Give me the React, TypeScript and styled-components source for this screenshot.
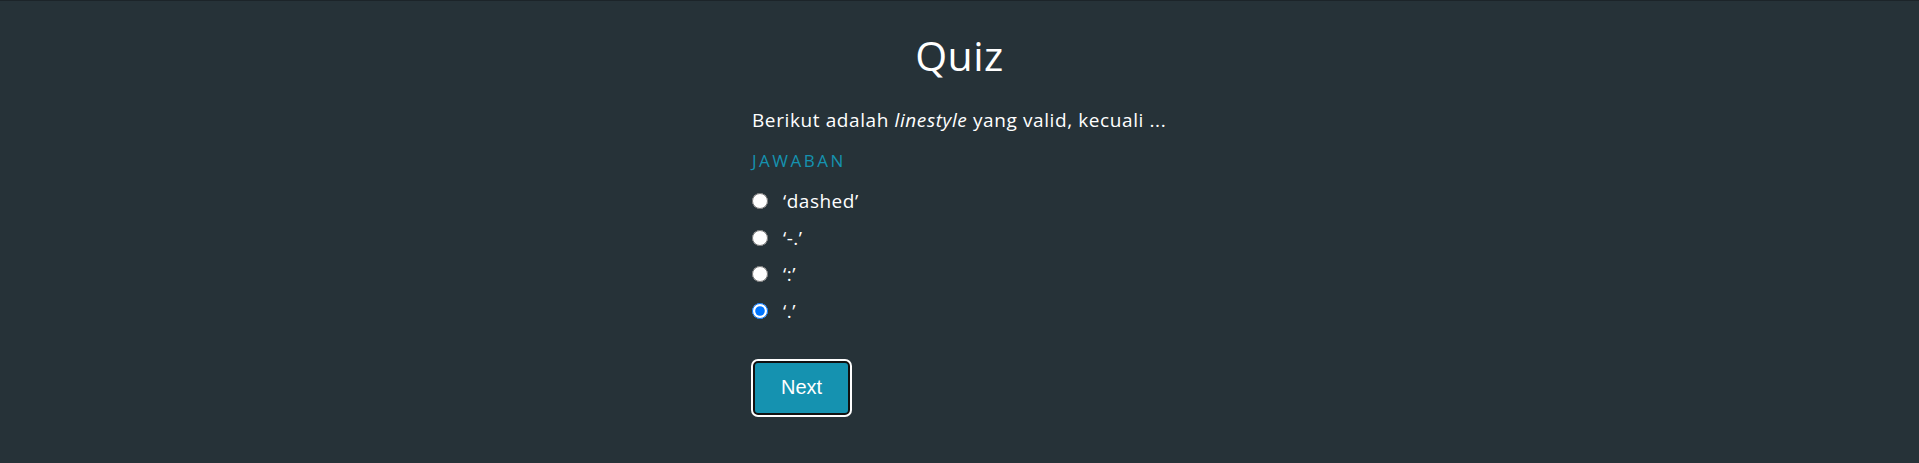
import { useState } from "react";
import styled, { createGlobalStyle } from "styled-components";

const GlobalStyle = createGlobalStyle`
  html, body {
    margin: 0;
    padding: 0;
  }

  body {
    background-color: #263238;
    border-top: 1px solid #1c2429;
    min-height: 100vh;
    font-family: "Open Sans", "Noto Sans", sans-serif;
    color: #fff;
  }
`;

const options = ["‘dashed’", "‘-.’", "‘:’", "‘.’"];

const Page = styled.main`
  display: flex;
  flex-flow: column nowrap;
  align-items: center;
  padding-top: 30px;
`;

const Title = styled.h1`
  margin: 0 0 28px;
  font-size: 41px;
  font-weight: 500;
  line-height: 48px;
  letter-spacing: 0.5px;
`;

const Card = styled.section`
  width: 415px;
`;

const Question = styled.p`
  margin: 0 0 16px;
  font-size: 19px;
  line-height: 26px;
  letter-spacing: 0.6px;

  em {
    font-style: italic;
  }
`;

const AnswerLabel = styled.h2`
  margin: 0 0 15px;
  font-size: 17px;
  font-weight: 400;
  line-height: 24px;
  letter-spacing: 2.5px;
  color: #1592b0;
`;

const OptionList = styled.div`
  display: flex;
  flex-flow: column nowrap;
  gap: 10.5px;
  margin-bottom: 37px;
`;

const Option = styled.label`
  display: flex;
  align-items: center;
  gap: 15px;
  height: 26px;
  font-size: 19px;
  letter-spacing: 0.5px;
  cursor: pointer;

  input {
    width: 16px;
    height: 16px;
    margin: 0;
  }
`;

const NextButton = styled.button`
  width: 97px;
  height: 54px;
  margin-left: 1px;
  background-color: #1592b0;
  color: #fff;
  font-family: "Liberation Sans", Arial, sans-serif;
  font-size: 20px;
  border: 2px solid #111;
  border-radius: 5px;
  box-shadow: 0 0 0 2px #fff;
  cursor: pointer;
`;

const App = () => {
  const [selected, setSelected] = useState(3);

  return (
    <>
      <GlobalStyle />
      <Page>
        <Title>Quiz</Title>
        <Card>
          <Question>
            Berikut adalah <em>linestyle</em> yang valid, kecuali ...
          </Question>
          <AnswerLabel>JAWABAN</AnswerLabel>
          <OptionList>
            {options.map((option, i) => (
              <Option key={option}>
                <input
                  type="radio"
                  name="answer"
                  checked={selected === i}
                  onChange={() => setSelected(i)}
                />
                {option}
              </Option>
            ))}
          </OptionList>
          <NextButton type="button">Next</NextButton>
        </Card>
      </Page>
    </>
  );
};

export default App;
